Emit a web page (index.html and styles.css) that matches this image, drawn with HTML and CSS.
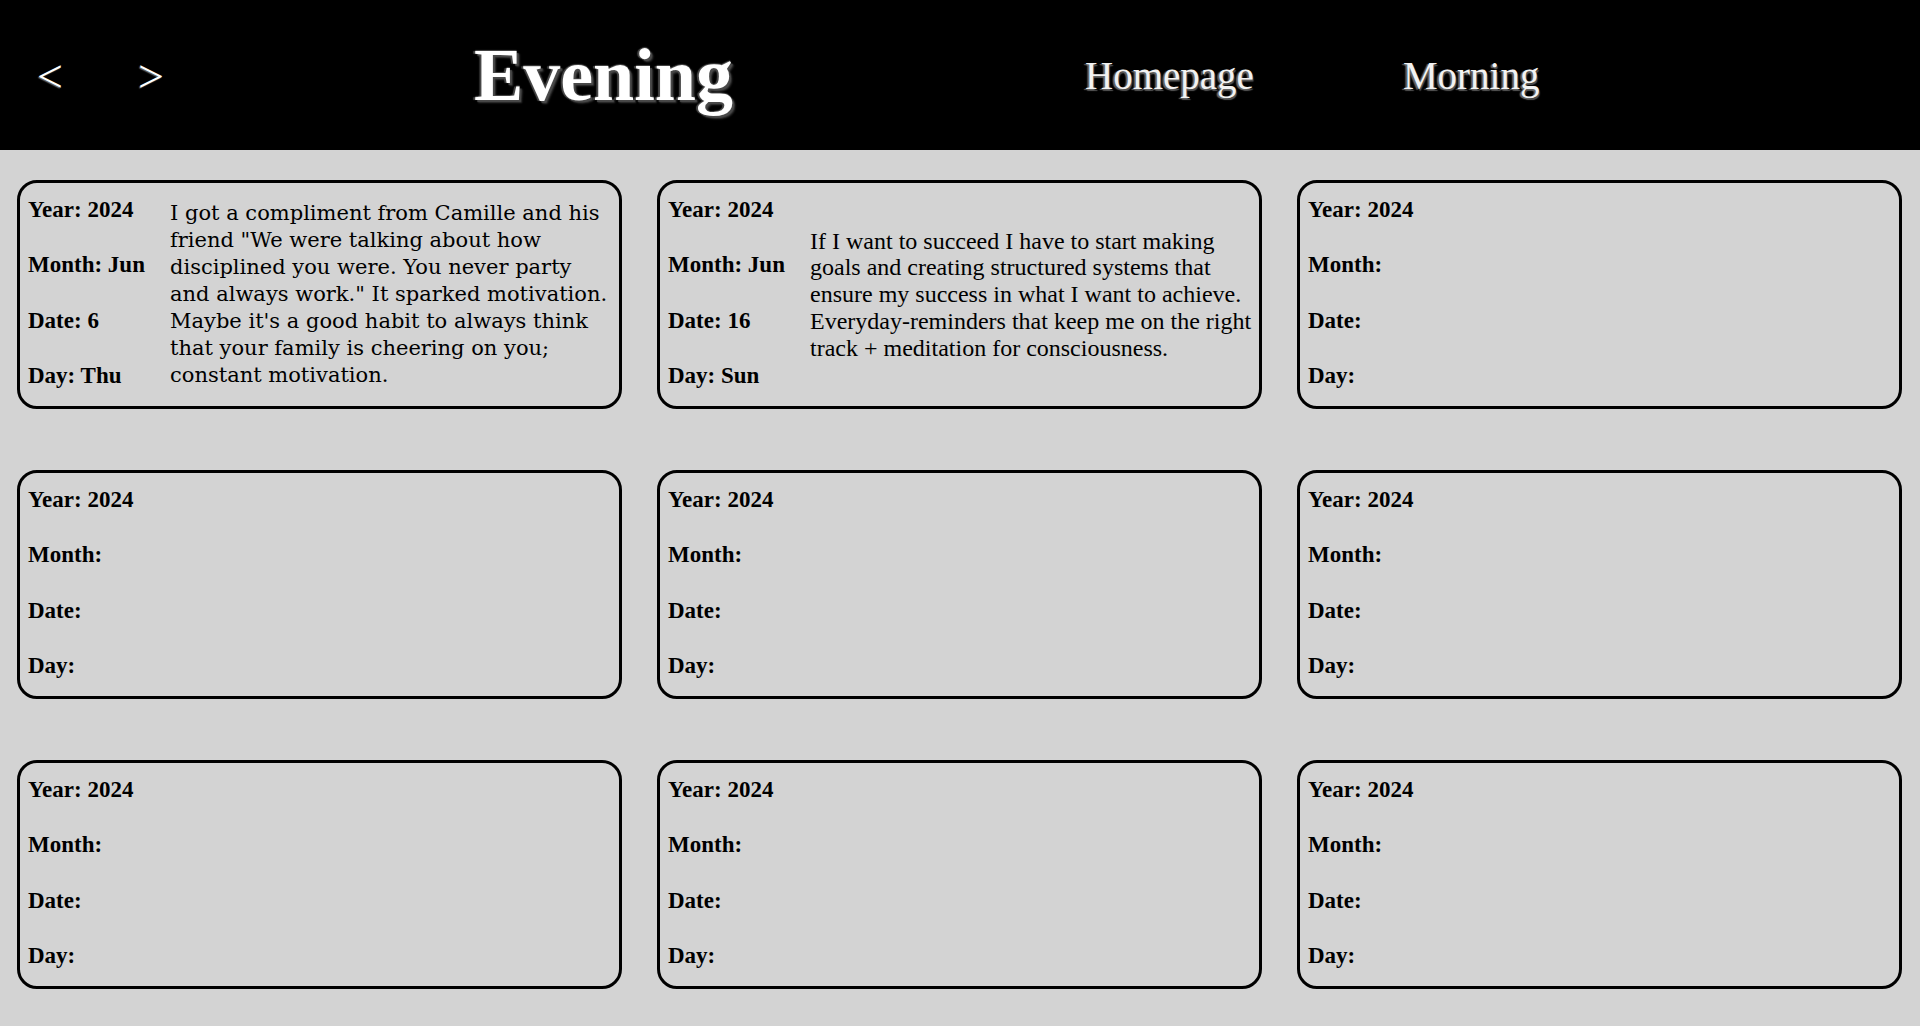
FILE: index.html
```html
<!DOCTYPE html>
<html lang="en">
<head>
<meta charset="utf-8">
<title>Evening</title>
<link rel="stylesheet" href="styles.css">
</head>
<body>
<header class="topbar">
  <a class="arrow" href="#">&lt;</a>
  <a class="arrow arrow-next" href="#">&gt;</a>
  <h1 class="title">Evening</h1>
  <a class="link link-home" href="#">Homepage</a>
  <a class="link link-morning" href="#">Morning</a>
</header>
<main class="grid">
  <section class="card">
    <div class="fields">
      <p class="field">Year: 2024</p>
      <p class="field">Month: Jun</p>
      <p class="field">Date: 6</p>
      <p class="field">Day: Thu</p>
    </div>
    <p class="note note-alt">I got a compliment from Camille and his friend "We were talking about how disciplined you were. You never party and always work." It sparked motivation. Maybe it's a good habit to always think that your family is cheering on you; constant motivation.</p>
  </section>
  <section class="card">
    <div class="fields">
      <p class="field">Year: 2024</p>
      <p class="field">Month: Jun</p>
      <p class="field">Date: 16</p>
      <p class="field">Day: Sun</p>
    </div>
    <p class="note">If I want to succeed I have to start making goals and creating structured systems that ensure my success in what I want to achieve. Everyday-reminders that keep me on the right track + meditation for consciousness.</p>
  </section>
  <section class="card">
    <div class="fields">
      <p class="field">Year: 2024</p>
      <p class="field">Month:</p>
      <p class="field">Date:</p>
      <p class="field">Day:</p>
    </div>
  </section>
  <section class="card">
    <div class="fields">
      <p class="field">Year: 2024</p>
      <p class="field">Month:</p>
      <p class="field">Date:</p>
      <p class="field">Day:</p>
    </div>
  </section>
  <section class="card">
    <div class="fields">
      <p class="field">Year: 2024</p>
      <p class="field">Month:</p>
      <p class="field">Date:</p>
      <p class="field">Day:</p>
    </div>
  </section>
  <section class="card">
    <div class="fields">
      <p class="field">Year: 2024</p>
      <p class="field">Month:</p>
      <p class="field">Date:</p>
      <p class="field">Day:</p>
    </div>
  </section>
  <section class="card">
    <div class="fields">
      <p class="field">Year: 2024</p>
      <p class="field">Month:</p>
      <p class="field">Date:</p>
      <p class="field">Day:</p>
    </div>
  </section>
  <section class="card">
    <div class="fields">
      <p class="field">Year: 2024</p>
      <p class="field">Month:</p>
      <p class="field">Date:</p>
      <p class="field">Day:</p>
    </div>
  </section>
  <section class="card">
    <div class="fields">
      <p class="field">Year: 2024</p>
      <p class="field">Month:</p>
      <p class="field">Date:</p>
      <p class="field">Day:</p>
    </div>
  </section>
</main>
</body>
</html>
```
FILE: styles.css
```css
html, body {
  margin: 0;
  padding: 0;
}

body {
  background: #d3d3d3;
  color: #000;
  font-family: "Liberation Serif", "Times New Roman", serif;
}

.topbar {
  height: 150px;
  box-sizing: border-box;
  background: #000;
  display: flex;
  align-items: center;
  padding-left: 37px;
}

.arrow {
  font-size: 46px;
  color: #fff;
  text-decoration: none;
  margin-top: 2px;
  text-shadow: -1px 1px 1px #6a6a6a;
}

.arrow-next {
  margin-left: 75px;
}

.title {
  margin: 0 0 0 310px;
  font-size: 74px;
  font-weight: bold;
  color: #fff;
  line-height: normal;
  text-shadow: -2px 0 1px #4a4a4a, 2px 2px 1px #4a4a4a, 0 -1px 1px #4a4a4a, 3px 3px 2px #333;
}

.link {
  font-size: 39px;
  color: #f2f2f2;
  text-decoration: none;
  text-shadow: -2px 1px 1px #666, 1px 2px 1px #555;
}

.link-home {
  margin-left: 352px;
}

.link-morning {
  margin-left: 149px;
}

.grid {
  display: grid;
  grid-template-columns: repeat(3, 1fr);
  column-gap: 35px;
  row-gap: 61px;
  padding: 30px 18px 0 17px;
}

.card {
  height: 229px;
  box-sizing: border-box;
  border: 3px solid #000;
  border-radius: 20px;
  display: flex;
  align-items: center;
  padding: 0 4px 0 8px;
}

.fields {
  flex: 0 0 142px;
  align-self: stretch;
  display: flex;
  flex-direction: column;
  justify-content: space-between;
  padding: 14px 0 17px;
  box-sizing: border-box;
}

.field {
  margin: 0;
  font-size: 23px;
  font-weight: bold;
  white-space: nowrap;
}

.note {
  flex: 1;
  margin: 0;
  font-size: 24px;
  line-height: 26.7px;
}

.note-alt {
  font-family: "DejaVu Serif", "Liberation Serif", serif;
  font-size: 21px;
  line-height: 27px;
}
```
